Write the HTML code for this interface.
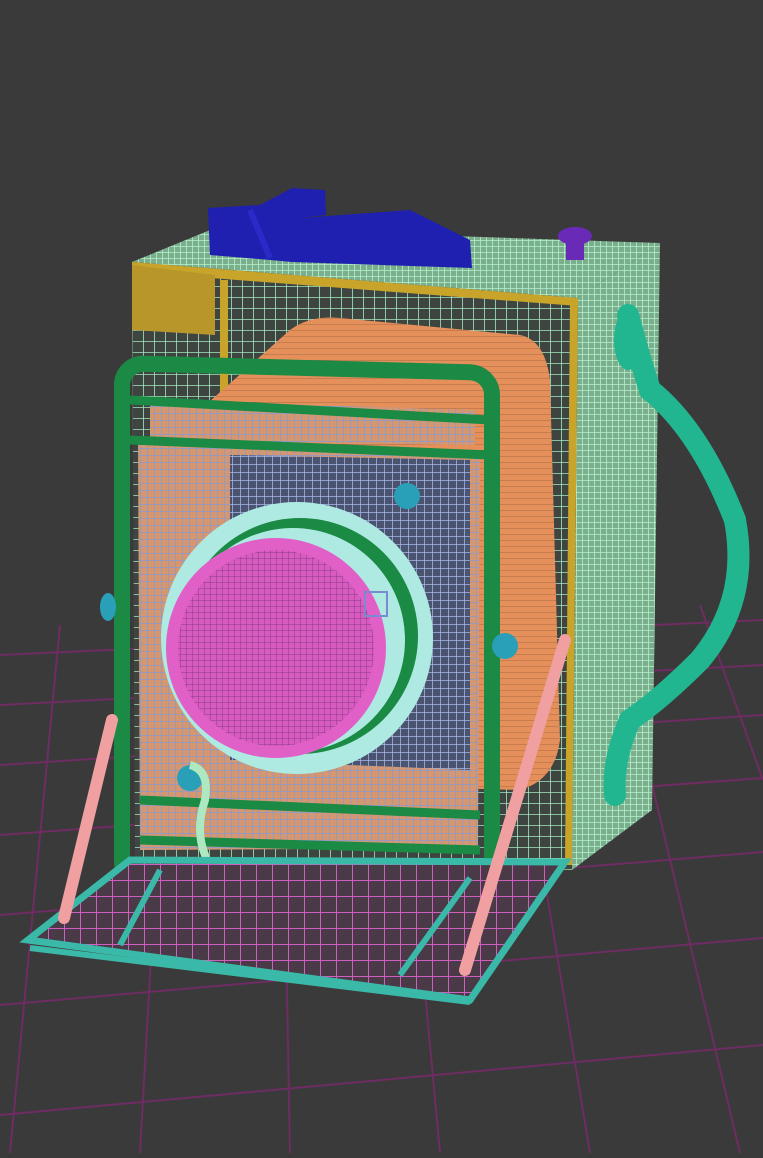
<!DOCTYPE html>
<html><head><meta charset="utf-8"><style>html,body{margin:0;padding:0;background:#3a3a3a;overflow:hidden}</style></head>
<body>
<svg width="763" height="1153" viewBox="0 0 763 1153" xmlns="http://www.w3.org/2000/svg">
<defs>
<pattern id="gm" width="6" height="6" patternUnits="userSpaceOnUse"><rect width="6" height="6" fill="#7aae8c"/><path d="M0 0H6M0 0V6" stroke="#b4f0cc" stroke-width="1.6"/></pattern>
<pattern id="gf" width="11" height="11" patternUnits="userSpaceOnUse"><rect width="11" height="11" fill="#3e4440"/><path d="M0 0H11M0 0V11" stroke="#a4e6c0" stroke-width="1.6"/></pattern>
<pattern id="go" width="6" height="6" patternUnits="userSpaceOnUse"><rect width="6" height="6" fill="#e5905a"/><path d="M0 0H6" stroke="#a86a44" stroke-width="1"/></pattern>
<pattern id="gb" width="7" height="7" patternUnits="userSpaceOnUse"><rect width="7" height="7" fill="#d59770"/><path d="M0 0H7M0 0V7" stroke="#8a9ad0" stroke-width="1.5"/></pattern>
<pattern id="gb2" width="8" height="8" patternUnits="userSpaceOnUse"><rect width="8" height="8" fill="#4a5470"/><path d="M0 0H8M0 0V8" stroke="#a8b8e8" stroke-width="1.5"/></pattern>
<pattern id="gp" width="6" height="6" patternUnits="userSpaceOnUse"><rect width="6" height="6" fill="#d85cc0"/><path d="M0 0H6M0 0V6" stroke="#8a3a8a" stroke-width="1"/></pattern>
<pattern id="gpk" width="16" height="16" patternUnits="userSpaceOnUse"><rect width="16" height="16" fill="#4a3a48"/><path d="M0 0H16M0 0V16" stroke="#d060c0" stroke-width="2"/></pattern>
</defs>
<rect width="763" height="1153" fill="#3a3a3a"/>
<g stroke="#6e2c62" stroke-width="2" fill="none">
<path d="M0 655L763 620M0 705L763 665M0 765L763 715M0 835L763 778M0 915L763 852M0 1005L763 938M0 1115L763 1045"/>
<path d="M60 625L10 1153M170 620L140 1153M280 617L290 1153M390 615L440 1153M500 612L590 1153M610 608L740 1153M700 605L763 780"/>
</g>
<polygon points="578,298 660,243 652,810 572,870" fill="url(#gm)"/>
<polygon points="132,262 215,228 660,243 578,298" fill="url(#gm)"/>
<polygon points="132,262 578,298 572,870 135,860" fill="url(#gf)"/>
<polygon points="132,262 578,298 578,306 132,272" fill="#c9a42a"/>
<polygon points="132,265 215,275 215,335 132,330" fill="#b8962a"/>
<polygon points="570,300 578,300 572,865 565,865" fill="#c9a42a"/>
<polygon points="220,280 228,280 228,440 220,440" fill="#c9a42a"/>
<polygon points="208,208 260,205 292,188 325,190 326,215 300,218 410,210 470,240 472,268 292,262 270,260 210,255" fill="#2020b0"/>
<path d="M250 210 L270 258" stroke="#2a2ac8" stroke-width="6"/>
<ellipse cx="575" cy="236" rx="17" ry="9" fill="#6a2ab8"/>
<rect x="566" y="238" width="18" height="22" fill="#6a2ab8"/>
<path d="M200 410 L290 330 Q310 315 340 318 L520 335 Q545 340 550 380 L560 740 Q555 780 520 790 L160 780 Z" fill="url(#go)"/>
<path d="M628 315 Q640 360 650 390 Q700 430 735 520 Q750 600 700 660 Q660 700 630 720 Q612 760 615 795" stroke="#22b690" stroke-width="22" fill="none" stroke-linecap="round"/>
<ellipse cx="628" cy="340" rx="14" ry="30" fill="#22b690"/>
<polygon points="138,440 480,450 478,848 140,850" fill="url(#gb)"/>
<polygon points="230,455 470,460 470,770 230,760" fill="url(#gb2)"/>
<polygon points="150,400 475,410 475,445 150,440" fill="url(#gb)"/>
<rect x="122" y="360" width="370" height="520" rx="22" fill="none" stroke="#1a8a44" stroke-width="16" transform="skewY(1.5)" />
<path d="M130 400 L490 420 M130 440 L490 455 M140 800 L480 815 M140 840 L480 850" stroke="#1a8a44" stroke-width="9"/>
<circle cx="407" cy="496" r="13" fill="#2aa0b8"/>
<circle cx="505" cy="646" r="13" fill="#2aa0b8"/>
<ellipse cx="108" cy="607" rx="8" ry="14" fill="#2aa0b8"/>
<circle cx="297" cy="638" r="136" fill="#aeeae2"/>
<circle cx="300" cy="636" r="118" fill="#1a8a44"/>
<circle cx="293" cy="640" r="112" fill="#aeeae2"/>
<circle cx="276" cy="648" r="104" fill="url(#gp)"/>
<circle cx="276" cy="648" r="104" fill="none" stroke="#e060c8" stroke-width="12"/>
<rect x="365" y="592" width="22" height="24" fill="none" stroke="#7a8ad0" stroke-width="2"/>
<circle cx="190" cy="778" r="13" fill="#2aa0b8"/>
<path d="M190 765 Q210 770 205 800 Q195 830 205 855 Q210 872 220 875" stroke="#aee8c0" stroke-width="8" fill="none"/>
<polygon points="28,940 130,860 565,862 470,1000" fill="url(#gpk)"/>
<polygon points="28,940 130,860 565,862 470,1000" fill="none" stroke="#3ab8a8" stroke-width="7"/>
<path d="M120 945 L160 870 M400 975 L470 878 M30 948 L470 1002" stroke="#3ab8a8" stroke-width="6"/>
<path d="M112 720 L64 918" stroke="#f0a0a0" stroke-width="12" stroke-linecap="round"/>
<path d="M565 640 L465 970" stroke="#f0a0a0" stroke-width="12" stroke-linecap="round"/>
</svg>
</body></html>
